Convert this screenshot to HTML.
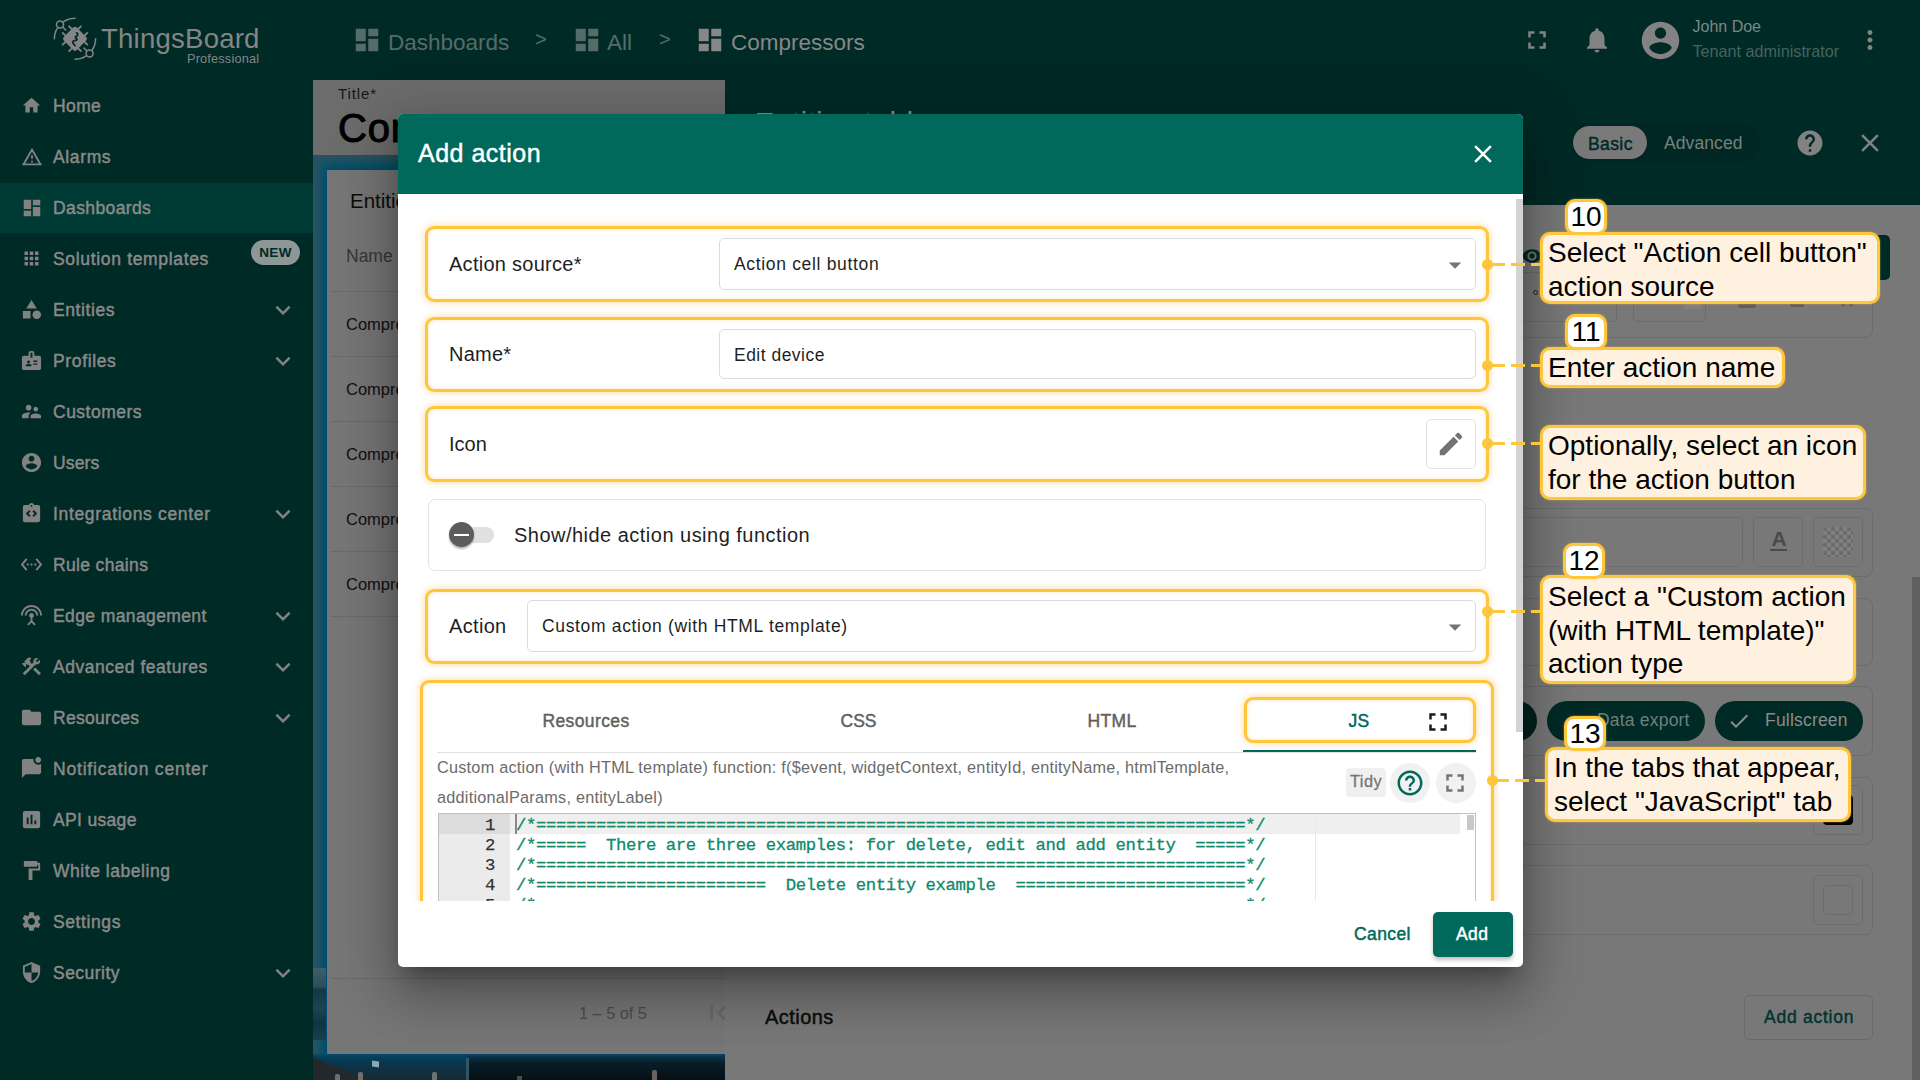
<!DOCTYPE html>
<html>
<head>
<meta charset="utf-8">
<title>ThingsBoard - Add action</title>
<style>
*{box-sizing:border-box;margin:0;padding:0}
html,body{width:1920px;height:1080px;overflow:hidden;background:#787878;font-family:"Liberation Sans",sans-serif;}
.abs{position:absolute}
svg{display:block}
#root{position:absolute;left:0;top:0;width:1920px;height:1080px;overflow:hidden}
.t{position:absolute;white-space:nowrap}
/* ---------- sidebar ---------- */
#side{left:0;top:0;width:313px;height:1080px;background:#002a26}
.mi{position:absolute;left:0;width:313px;height:51px;color:#8a8a8a;font-size:17.5px;}
.mi.sel{background:linear-gradient(#002a26 0,#002a26 1px,#003a35 1px)}
.mi svg.ic{position:absolute;left:20px;top:14px;width:23px;height:23px;fill:#828282}
.mi span{position:absolute;left:53px;top:16px;line-height:21px;white-space:nowrap;transform-origin:0 50%}
.mi svg.ch{position:absolute;left:268px;top:11px;width:30px;height:30px;fill:#828282}
/* ---------- topbar ---------- */
#top{left:313px;top:0;width:1607px;height:80px;background:#002a26}
.bc{position:absolute;top:28px;font-size:22.5px;line-height:30px;color:#566c69;white-space:nowrap}
.bc.on{color:#878787}
.bci{position:absolute;top:24.5px;width:30px;height:30px;fill:#566c69}
.bci.on{fill:#878787}
/* ---------- left edit area ---------- */
#titlep{left:313px;top:80px;width:412px;height:75px;background:#6c6c6c}
#dash{left:313px;top:155px;width:412px;height:925px;background:#005068;box-shadow:inset 9px 9px 9px -1px rgba(50,84,96,.8)}
#wcard{left:326px;top:169px;width:399px;height:885px;background:#767676;border-left:1px solid #004a7a;border-top:1px solid #004a7a}
.wrow{position:absolute;left:346px;font-size:16.5px;color:#111;white-space:nowrap}
.wline{position:absolute;left:331px;width:394px;height:1px;background:#6a6a6a}
/* ---------- right panel ---------- */
#rhead{left:725px;top:80px;width:1195px;height:125px;background:#002a26}
#rbody{left:725px;top:205px;width:1195px;height:875px;background:#787878}
.fcard{position:absolute;border:1px solid #6c6c6c;border-radius:8px}
/* ---------- dialog ---------- */
.med{-webkit-text-stroke:.45px currentColor}
#dlg{left:398px;top:114px;width:1125px;height:853px;background:#fff;border-radius:5px;overflow:hidden;box-shadow:0 14px 19px -9px rgba(0,0,0,.3),0 30px 48px 4px rgba(0,0,0,.19),0 11px 58px 10px rgba(0,0,0,.17)}
#dhead{left:0;top:0;width:1125px;height:80px;background:#00695c}
#dbody{left:0;top:80px;width:1125px;height:707px;overflow:hidden}
.hl{position:absolute;border:3px solid #fdc63b;border-radius:9px;box-shadow:0 0 6px 1px rgba(253,190,100,.5),inset 0 0 4px 0 rgba(253,190,100,.4)}
.fld{position:absolute;border:1px solid #dcdcdc;border-radius:5px;background:#fff}
.lbl{position:absolute;white-space:nowrap;font-size:20px;line-height:24px;color:#1f1f1f}
.val{position:absolute;white-space:nowrap;font-size:17.5px;line-height:21px;color:#1f1f1f;letter-spacing:.3px}
.tab{position:absolute;white-space:nowrap;font-size:17.5px;line-height:21px;color:#616161;letter-spacing:.4px;transform:translateX(-50%)}
.code{position:absolute;white-space:pre;font-family:"Liberation Mono",monospace;font-size:17.3px;letter-spacing:-.38px;line-height:20px;color:#0f8a6c;-webkit-text-stroke:.3px #0f8a6c}
.ln{position:absolute;width:56px;text-align:right;font-family:"Liberation Mono",monospace;font-size:17.3px;letter-spacing:-.38px;line-height:20px;color:#333;-webkit-text-stroke:.25px #333}
/* ---------- callouts ---------- */
.co{position:absolute;border:3px solid #fdc63b;border-radius:10px;background:#fff1df;color:#000;font-size:28px;line-height:33.5px;padding:1px 0 0 5px;white-space:nowrap;box-shadow:0 0 2px rgba(253,198,59,.7)}
.nb{position:absolute;border:3px solid #fdc63b;border-radius:10px;background:#fff;color:#000;font-size:28px;line-height:30px;text-align:center;box-shadow:0 0 2px rgba(253,198,59,.7)}
.dot{position:absolute;width:11px;height:11px;border-radius:50%;background:#fdc63b}
.dl{position:absolute;height:3px;background:repeating-linear-gradient(270deg,#fdc63b 0,#fdc63b 14px,transparent 14px,transparent 20px)}

</style>
</head>
<body>
<div id="root">
<div id="side" class="abs">
<div class="mi" style="top:80px"><svg class="ic" style="left:21px;top:15px;width:21px;height:21px" viewBox="0 0 24 24"><path fill-rule="evenodd" d="M10 20v-6h4v6h5v-8h3L12 3 2 12h3v8z"/></svg><span class="med" style="letter-spacing:0.39px">Home</span></div>
<div class="mi" style="top:131px"><svg class="ic" style="left:20.5px;top:14.5px;width:22px;height:22px" viewBox="0 0 24 24"><path fill-rule="evenodd" d="M12 5.99L19.53 19H4.47L12 5.99M12 2L1 21h22L12 2zm1 14h-2v2h2v-2zm0-6h-2v4h2v-4z"/></svg><span class="med" style="letter-spacing:0.63px">Alarms</span></div>
<div class="mi sel" style="top:182px"><svg class="ic" style="left:20.5px;top:14.5px;width:22px;height:22px" viewBox="0 0 24 24"><path fill-rule="evenodd" d="M3 13h8V3H3v10zm0 8h8v-6H3v6zm10 0h8V11h-8v10zm0-18v6h8V3h-8z"/></svg><span class="med" style="letter-spacing:0.39px">Dashboards</span></div>
<div class="mi" style="top:233px"><svg class="ic" style="left:21px;top:15px;width:21px;height:21px" viewBox="0 0 24 24"><path fill-rule="evenodd" d="M4 8h4V4H4v4zm6 12h4v-4h-4v4zm-6 0h4v-4H4v4zm0-6h4v-4H4v4zm6 0h4v-4h-4v4zm6-10v4h4V4h-4zm-6 4h4V4h-4v4zm6 6h4v-4h-4v4zm0 6h4v-4h-4v4z"/></svg><span class="med" style="letter-spacing:0.67px">Solution templates</span></div>
<div class="mi" style="top:284px"><svg class="ic" style="" viewBox="0 0 24 24"><path fill-rule="evenodd" d="M12 2l-5.5 9h11zM3 13.5h8v8H3zM17.5 13a4.5 4.5 0 1 0 0 9a4.5 4.5 0 1 0 0-9z"/></svg><span class="med" style="letter-spacing:0.58px">Entities</span><svg class="ch" style="" viewBox="0 0 24 24"><path fill-rule="evenodd" d="M16.59 8.59L12 13.17 7.41 8.59 6 10l6 6 6-6z"/></svg></div>
<div class="mi" style="top:335px"><svg class="ic" style="" viewBox="0 0 24 24"><path fill-rule="evenodd" d="M20 7h-5V4c0-1.1-.9-2-2-2h-2c-1.1 0-2 .9-2 2v3H4c-1.1 0-2 .9-2 2v11c0 1.1.9 2 2 2h16c1.1 0 2-.9 2-2V9c0-1.1-.9-2-2-2zM9 12c.83 0 1.5.67 1.5 1.5S9.83 15 9 15s-1.5-.67-1.5-1.5S8.17 12 9 12zm3 6H6v-.75c0-1 2-1.5 3-1.5s3 .5 3 1.5V18zm1-9h-2V4h2v5zm5 7.5h-4V15h4v1.5zm0-3h-4V12h4v1.5z"/></svg><span class="med" style="letter-spacing:0.64px">Profiles</span><svg class="ch" style="" viewBox="0 0 24 24"><path fill-rule="evenodd" d="M16.59 8.59L12 13.17 7.41 8.59 6 10l6 6 6-6z"/></svg></div>
<div class="mi" style="top:386px"><svg class="ic" style="" viewBox="0 0 24 24"><path fill-rule="evenodd" d="M16.5 12c1.38 0 2.49-1.12 2.49-2.5S17.88 7 16.5 7C15.12 7 14 8.12 14 9.5s1.12 2.5 2.5 2.5zM9 11c1.66 0 2.99-1.34 2.99-3S10.66 5 9 5C7.34 5 6 6.34 6 8s1.34 3 3 3zm7.5 3c-1.83 0-5.5.92-5.5 2.75V19h11v-2.25c0-1.83-3.67-2.75-5.5-2.75zM9 13c-2.33 0-7 1.17-7 3.5V19h7v-2.25c0-.85.33-2.34 2.37-3.47C10.5 13.1 9.66 13 9 13z"/></svg><span class="med" style="letter-spacing:0.49px">Customers</span></div>
<div class="mi" style="top:437px"><svg class="ic" style="" viewBox="0 0 24 24"><path fill-rule="evenodd" d="M12 2C6.48 2 2 6.48 2 12s4.48 10 10 10 10-4.48 10-10S17.52 2 12 2zm0 3c1.66 0 3 1.34 3 3s-1.34 3-3 3-3-1.34-3-3 1.34-3 3-3zm0 14.2c-2.5 0-4.71-1.28-6-3.22.03-1.99 4-3.08 6-3.08 1.99 0 5.97 1.09 6 3.08-1.29 1.94-3.5 3.22-6 3.22z"/></svg><span class="med" style="letter-spacing:0.16px">Users</span></div>
<div class="mi" style="top:488px"><svg class="ic" style="" viewBox="0 0 24 24"><path fill-rule="evenodd" d="M19 3h-4.18C14.4 1.84 13.3 1 12 1s-2.4.84-2.82 2H5c-1.1 0-2 .9-2 2v14c0 1.1.9 2 2 2h14c1.1 0 2-.9 2-2V5c0-1.1-.9-2-2-2zm-7 0c.55 0 1 .45 1 1s-.45 1-1 1-1-.45-1-1 .45-1 1-1zM11 14.17L9.59 15.59 6 12l3.59-3.59L11 9.83 8.83 12 11 14.17zm3.41 1.42L13 14.17 15.17 12 13 9.83l1.41-1.42L18 12l-3.59 3.59z"/></svg><span class="med" style="letter-spacing:0.67px">Integrations center</span><svg class="ch" style="" viewBox="0 0 24 24"><path fill-rule="evenodd" d="M16.59 8.59L12 13.17 7.41 8.59 6 10l6 6 6-6z"/></svg></div>
<div class="mi" style="top:539px"><svg class="ic" style="" viewBox="0 0 24 24"><path fill-rule="evenodd" d="M7.77 6.76L6.23 5.48.82 12l5.41 6.52 1.54-1.28L3.42 12l4.35-5.24zM7 13h2v-2H7v2zm10-2h-2v2h2v-2zm-6 2h2v-2h-2v2zm6.77-7.52l-1.54 1.28L20.58 12l-4.35 5.24 1.54 1.28L23.18 12l-5.41-6.52z"/></svg><span class="med" style="letter-spacing:0.35px">Rule chains</span></div>
<div class="mi" style="top:590px"><svg class="ic" style="" viewBox="0 0 24 24"><path fill-rule="evenodd" d="M12 5c-3.87 0-7 3.13-7 7h2c0-2.76 2.24-5 5-5s5 2.24 5 5h2c0-3.87-3.13-7-7-7zm1 9.29c.88-.39 1.5-1.26 1.5-2.29 0-1.38-1.12-2.5-2.5-2.5S9.5 10.62 9.5 12c0 1.02.62 1.9 1.5 2.29v3.3L7.59 21 9 22.41l3-3 3 3L16.41 21 13 17.59v-3.3zM12 1C5.93 1 1 5.93 1 12h2c0-4.97 4.03-9 9-9s9 4.03 9 9h2c0-6.07-4.93-11-11-11z"/></svg><span class="med" style="letter-spacing:0.39px">Edge management</span><svg class="ch" style="" viewBox="0 0 24 24"><path fill-rule="evenodd" d="M16.59 8.59L12 13.17 7.41 8.59 6 10l6 6 6-6z"/></svg></div>
<div class="mi" style="top:641px"><svg class="ic" style="" viewBox="0 0 24 24"><path fill-rule="evenodd" d="M13.78 15.17l2.12-2.12 6 6-2.12 2.12zM17.5 10c1.93 0 3.5-1.57 3.5-3.5 0-.58-.16-1.12-.41-1.6l-2.7 2.7-1.49-1.49 2.7-2.7c-.48-.25-1.02-.41-1.6-.41C15.57 3 14 4.57 14 6.5c0 .41.08.8.21 1.16l-1.85 1.85-1.78-1.78.71-.71-1.41-1.41L12 3.49c-1.17-1.17-3.07-1.17-4.24 0L4.22 7.03l1.41 1.41H2.81l-.71.71 3.54 3.54.71-.71V9.15l1.41 1.41.71-.71 1.78 1.78-7.41 7.41 2.12 2.12L16.34 9.79c.36.13.75.21 1.16.21z"/></svg><span class="med" style="letter-spacing:0.52px">Advanced features</span><svg class="ch" style="" viewBox="0 0 24 24"><path fill-rule="evenodd" d="M16.59 8.59L12 13.17 7.41 8.59 6 10l6 6 6-6z"/></svg></div>
<div class="mi" style="top:692px"><svg class="ic" style="" viewBox="0 0 24 24"><path fill-rule="evenodd" d="M10 4H4c-1.1 0-1.99.9-1.99 2L2 18c0 1.1.9 2 2 2h16c1.1 0 2-.9 2-2V8c0-1.1-.9-2-2-2h-8l-2-2z"/></svg><span class="med" style="letter-spacing:0.29px">Resources</span><svg class="ch" style="" viewBox="0 0 24 24"><path fill-rule="evenodd" d="M16.59 8.59L12 13.17 7.41 8.59 6 10l6 6 6-6z"/></svg></div>
<div class="mi" style="top:743px"><svg class="ic" style="" viewBox="0 0 24 24"><path fill-rule="evenodd" d="M22 6.98V16c0 1.1-.9 2-2 2H6l-4 4V4c0-1.1.9-2 2-2h10.1c-.06.32-.1.66-.1 1 0 2.76 2.24 5 5 5 1.13 0 2.16-.39 3-1.02zM16 3c0 1.66 1.34 3 3 3s3-1.34 3-3-1.34-3-3-3-3 1.34-3 3z"/></svg><span class="med" style="letter-spacing:0.8px">Notification center</span></div>
<div class="mi" style="top:794px"><svg class="ic" style="" viewBox="0 0 24 24"><path fill-rule="evenodd" d="M19 3H5c-1.1 0-2 .9-2 2v14c0 1.1.9 2 2 2h14c1.1 0 2-.9 2-2V5c0-1.1-.9-2-2-2zM9 17H7v-7h2v7zm4 0h-2V7h2v10zm4 0h-2v-4h2v4z"/></svg><span class="med" style="letter-spacing:0.33px">API usage</span></div>
<div class="mi" style="top:845px"><svg class="ic" style="" viewBox="0 0 24 24"><path fill-rule="evenodd" d="M18 4V3c0-.55-.45-1-1-1H5c-.55 0-1 .45-1 1v4c0 .55.45 1 1 1h12c.55 0 1-.45 1-1V6h1v4H9v11c0 .55.45 1 1 1h2c.55 0 1-.45 1-1v-9h8V4h-3z"/></svg><span class="med" style="letter-spacing:0.54px">White labeling</span></div>
<div class="mi" style="top:896px"><svg class="ic" style="" viewBox="0 0 24 24"><path fill-rule="evenodd" d="M19.14 12.94c.04-.3.06-.61.06-.94 0-.32-.02-.64-.07-.94l2.03-1.58c.18-.14.23-.41.12-.61l-1.92-3.32c-.12-.22-.37-.29-.59-.22l-2.39.96c-.5-.38-1.03-.7-1.62-.94l-.36-2.54c-.04-.24-.24-.41-.48-.41h-3.84c-.24 0-.43.17-.47.41l-.36 2.54c-.59.24-1.13.57-1.62.94l-2.39-.96c-.22-.08-.47 0-.59.22L2.74 8.87c-.12.21-.08.47.12.61l2.03 1.58c-.05.3-.09.63-.09.94s.02.64.07.94l-2.03 1.58c-.18.14-.23.41-.12.61l1.92 3.32c.12.22.37.29.59.22l2.39-.96c.5.38 1.03.7 1.62.94l.36 2.54c.05.24.24.41.48.41h3.84c.24 0 .44-.17.47-.41l.36-2.54c.59-.24 1.13-.56 1.62-.94l2.39.96c.22.08.47 0 .59-.22l1.92-3.32c.12-.22.07-.47-.12-.61l-2.01-1.58zM12 15.6c-1.98 0-3.6-1.62-3.6-3.6s1.62-3.6 3.6-3.6 3.6 1.62 3.6 3.6-1.62 3.6-3.6 3.6z"/></svg><span class="med" style="letter-spacing:0.6px">Settings</span></div>
<div class="mi" style="top:947px"><svg class="ic" style="" viewBox="0 0 24 24"><path fill-rule="evenodd" d="M12 1L3 5v6c0 5.55 3.84 10.74 9 12 5.16-1.26 9-6.45 9-12V5l-9-4zm0 10.99h7c-.53 4.12-3.28 7.79-7 8.94V12H5V6.3l7-3.11v8.8z"/></svg><span class="med" style="letter-spacing:0.47px">Security</span><svg class="ch" style="" viewBox="0 0 24 24"><path fill-rule="evenodd" d="M16.59 8.59L12 13.17 7.41 8.59 6 10l6 6 6-6z"/></svg></div>
<div class="abs" style="left:251px;top:240px;width:49px;height:25px;border-radius:13px;background:#8d9796;color:#002a26;font-size:13.5px;font-weight:bold;text-align:center;line-height:25px;letter-spacing:.3px">NEW</div>
<svg class="abs" style="left:52px;top:16px;width:46px;height:46px" viewBox="0 0 46 46" fill="none" stroke="#858585" stroke-width="1.5" stroke-linecap="round">
<path d="M43.6 22.75A20.6 20.6 0 0 1 23 43.35"/><path d="M2.4 22.75A20.6 20.6 0 0 1 23 2.15"/>
<path d="M10.7 11L13.8 14"/><path d="M35 35L32 32"/>
<circle cx="8" cy="8.4" r="3.5" fill="#002a26"/><circle cx="37.6" cy="37.6" r="3.5" fill="#002a26"/>
<g transform="translate(23 22.75) rotate(45)" stroke="none" fill="#858585">
<rect x="-9.2" y="-9.2" width="18.4" height="18.4" rx="2.6"/>
<rect x="-5.4" y="-13.6" width="1.8" height="5"/><rect x="3.6" y="-13.6" width="1.8" height="5"/>
<rect x="-5.4" y="8.6" width="1.8" height="5"/><rect x="3.6" y="8.6" width="1.8" height="5"/>
<rect x="-13.6" y="-5.4" width="5" height="1.8"/><rect x="-13.6" y="3.6" width="5" height="1.8"/>
<rect x="8.6" y="-5.4" width="5" height="1.8"/><rect x="8.6" y="3.6" width="5" height="1.8"/></g>
<path d="M24.6 16.8c1.6 1.2 1.4 3-.4 3.6-1.200.400-1.200 1.500.200 2.200 1 .500.700 1.600-.800 1.800-2.400.300-3.800 1.400-2.600 2.700M21 27.100l2.200 2.600" stroke="#002a26" stroke-width="1.700" stroke-linejoin="round"/>
</svg>
<div class="t" style="left:101px;top:21px;font-size:27.6px;line-height:36px;color:#858585;letter-spacing:.2px">ThingsBoard</div>
<div class="t" style="left:187px;top:52px;font-size:12.7px;line-height:15px;color:#858585;letter-spacing:.2px">Professional</div>
</div>
<div id="top" class="abs"></div>
<svg class="bci abs" style="left:352px" viewBox="0 0 24 24"><path fill-rule="evenodd" d="M3 13h8V3H3v10zm0 8h8v-6H3v6zm10 0h8V11h-8v10zm0-18v6h8V3h-8z"/></svg>
<div class="bc" style="left:388px">Dashboards</div>
<div class="bc" style="left:535px;top:24px;font-size:20px">&gt;</div>
<svg class="bci abs" style="left:571.500px" viewBox="0 0 24 24"><path fill-rule="evenodd" d="M3 13h8V3H3v10zm0 8h8v-6H3v6zm10 0h8V11h-8v10zm0-18v6h8V3h-8z"/></svg>
<div class="bc" style="left:607px">All</div>
<div class="bc" style="left:659px;top:24px;font-size:20px">&gt;</div>
<svg class="bci on abs" style="left:694.500px" viewBox="0 0 24 24"><path fill-rule="evenodd" d="M3 13h8V3H3v10zm0 8h8v-6H3v6zm10 0h8V11h-8v10zm0-18v6h8V3h-8z"/></svg>
<div class="bc on" style="left:731px">Compressors</div>
<svg class="abs" style="left:1522px;top:25px;width:30px;height:30px;fill:#838383" viewBox="0 0 24 24"><path fill-rule="evenodd" d="M7 14H5v5h5v-2H7v-3zm-2-4h2V7h3V5H5v5zm12 7h-3v2h5v-5h-2v3zM14 5v2h3v3h2V5h-5z"/></svg>
<svg class="abs" style="left:1582px;top:25px;width:30px;height:30px;fill:#838383" viewBox="0 0 24 24"><path fill-rule="evenodd" d="M12 22c1.1 0 2-.9 2-2h-4c0 1.1.89 2 2 2zm6-6v-5c0-3.07-1.64-5.64-4.5-6.32V4c0-.83-.67-1.5-1.5-1.5s-1.5.67-1.5 1.5v.68C7.63 5.36 6 7.92 6 11v5l-2 2v1h16v-1l-2-2z"/></svg>
<svg class="abs" style="left:1637.5px;top:17.5px;width:45px;height:45px;fill:#838383" viewBox="0 0 24 24"><path fill-rule="evenodd" d="M12 2C6.48 2 2 6.48 2 12s4.48 10 10 10 10-4.48 10-10S17.52 2 12 2zm0 3c1.66 0 3 1.34 3 3s-1.34 3-3 3-3-1.34-3-3 1.34-3 3-3zm0 14.2c-2.5 0-4.71-1.28-6-3.22.03-1.99 4-3.08 6-3.08 1.99 0 5.97 1.09 6 3.08-1.29 1.94-3.5 3.22-6 3.22z"/></svg>
<div class="t" style="left:1692.5px;top:17px;font-size:16px;line-height:20px;color:#7c8886">John Doe</div>
<div class="t" style="left:1692.5px;top:41px;font-size:16.2px;line-height:20px;color:#45645f">Tenant administrator</div>
<svg class="abs" style="left:1855px;top:25px;width:30px;height:30px;fill:#838383" viewBox="0 0 24 24"><path fill-rule="evenodd" d="M12 8c1.1 0 2-.9 2-2s-.9-2-2-2-2 .9-2 2 .9 2 2 2zm0 2c-1.1 0-2 .9-2 2s.9 2 2 2 2-.9 2-2-.9-2-2-2zm0 6c-1.1 0-2 .9-2 2s.9 2 2 2 2-.9 2-2-.9-2-2-2z"/></svg>
<div id="titlep" class="abs"></div>
<div class="t" style="left:338px;top:85px;font-size:15px;line-height:17px;color:#151515;letter-spacing:.9px">Title*</div>
<div class="t" style="left:338px;top:104px;font-size:40px;line-height:48px;color:#000;-webkit-text-stroke:1px #000;letter-spacing:.8px">Compressors</div>
<div id="dash" class="abs"></div>
<div class="abs" style="left:313px;top:1054px;width:154px;height:26px;background:linear-gradient(180deg,#074a6c 0,#053d58 4px,#0b3548 12px,#182a32 26px)"></div>
<div class="abs" style="left:313px;top:1040px;width:60px;height:40px;background:#23282a;clip-path:polygon(0 17px,13px 23px,56px 40px,0 40px)"></div>
<div class="abs" style="left:313px;top:968px;width:13px;height:72px;background:linear-gradient(180deg,#3d5f68 0,#2c4f5c 18px,#123844 22px,#1b4552 40px,#0f3440 55px,#16404e 72px)"></div>
<div class="abs" style="left:467px;top:1054px;width:258px;height:26px;background:linear-gradient(180deg,#0a4868 0,#0a3348 3px,#091d29 9px,#070f14 26px)"></div>
<div class="abs" style="left:466px;top:1058px;width:3px;height:22px;background:#2f5566"></div>
<div class="abs" style="left:372px;top:1061px;width:7px;height:6px;background:#8fa6b3;transform:skewY(8deg)"></div>
<div class="abs" style="left:380px;top:1061px;width:2px;height:12px;background:#1c2c36;transform:rotate(28deg)"></div>
<div class="abs" style="left:358px;top:1072px;width:5px;height:8px;background:#6f6f6f;border-radius:2px 2px 0 0"></div>
<div class="abs" style="left:432px;top:1072px;width:5px;height:8px;background:#6f6f6f;border-radius:2px 2px 0 0"></div>
<div class="abs" style="left:335px;top:1074px;width:5px;height:6px;background:#6f6f6f;border-radius:2px 2px 0 0"></div>
<div class="abs" style="left:652px;top:1070px;width:5px;height:10px;background:#6a625c;border-radius:2px 2px 0 0"></div>
<div class="abs" style="left:517px;top:1076px;width:5px;height:4px;background:#4a4a4a"></div>
<div id="wcard" class="abs"></div>
<div class="t" style="left:350px;top:189px;font-size:20.500px;line-height:24px;color:#0c0c0c">Entities</div>
<div class="t" style="left:346px;top:246px;font-size:17.500px;line-height:20px;color:#363636">Name</div>
<div class="wline" style="top:291px"></div>
<div class="wline" style="top:356px"></div>
<div class="wline" style="top:421px"></div>
<div class="wline" style="top:486px"></div>
<div class="wline" style="top:551px"></div>
<div class="wline" style="top:616px"></div>
<div class="wline" style="top:978px"></div>
<div class="wrow" style="top:314px;line-height:20px">Compressor</div>
<div class="wrow" style="top:379px;line-height:20px">Compressor</div>
<div class="wrow" style="top:444px;line-height:20px">Compressor</div>
<div class="wrow" style="top:509px;line-height:20px">Compressor</div>
<div class="wrow" style="top:574px;line-height:20px">Compressor</div>
<div class="t" style="left:579px;top:1004px;font-size:16.3px;line-height:18px;color:#4c4c4c">1 – 5 of 5</div>
<svg class="abs" style="left:703px;top:998px;width:30px;height:30px;fill:#696969" viewBox="0 0 24 24"><path fill-rule="evenodd" d="M18.41 16.59L13.82 12l4.59-4.59L17 6l-6 6 6 6zM6 6h2v12H6z"/></svg>
<div id="rhead" class="abs"></div>
<div id="rbody" class="abs"></div>
<div class="abs" style="left:1912px;top:577px;width:8px;height:503px;background:#5f5f5f"></div>
<div class="abs" style="left:1570px;top:123px;width:190px;height:39px;border-radius:20px;background:#002723"></div>
<div class="abs" style="left:1573px;top:126px;width:74px;height:33px;border-radius:17px;background:#797979"></div>
<div class="t med" style="left:1588px;top:134px;font-size:17.500px;line-height:21px;color:#002a26;letter-spacing:.4px">Basic</div>
<div class="t" style="left:1664px;top:133px;font-size:17.500px;line-height:21px;color:#76827f;letter-spacing:.1px">Advanced</div>
<svg class="abs" style="left:1795px;top:128px;width:30px;height:30px;fill:#828282" viewBox="0 0 24 24"><path fill-rule="evenodd" d="M12 2C6.48 2 2 6.48 2 12s4.48 10 10 10 10-4.48 10-10S17.52 2 12 2zm1 17h-2v-2h2v2zm2.07-7.75l-.9.92C13.45 12.9 13 13.5 13 15h-2v-.5c0-1.1.45-2.1 1.17-2.83l1.24-1.26c.37-.36.59-.86.59-1.41 0-1.1-.9-2-2-2s-2 .9-2 2H8c0-2.21 1.79-4 4-4s4 1.79 4 4c0 .88-.36 1.68-.93 2.25z"/></svg>
<svg class="abs" style="left:1855px;top:128px;width:30px;height:30px;fill:#828282" viewBox="0 0 24 24"><path fill-rule="evenodd" d="M19 6.41L17.59 5 12 10.59 6.41 5 5 6.41 10.59 12 5 17.59 6.41 19 12 13.41 17.59 19 19 17.59 13.41 12z"/></svg>
<div class="t" style="left:754.5px;top:105px;font-size:30px;line-height:36px;color:#8c8c8c;letter-spacing:.3px">Entities table</div>
<div class="fcard" style="left:745px;top:250px;width:1128px;height:88px"></div>
<div class="abs" style="left:1700px;top:235px;width:190px;height:45px;border-radius:5px;background:#002a26"></div>
<svg class="abs" style="left:1521px;top:245px;width:22px;height:22px;fill:#002a26" viewBox="0 0 24 24"><path fill-rule="evenodd" d="M12 4.5C7 4.5 2.73 7.61 1 12c1.73 4.39 6 7.5 11 7.5s9.27-3.11 11-7.5c-1.73-4.39-6-7.5-11-7.5zM12 17c-2.76 0-5-2.24-5-5s2.24-5 5-5 5 2.24 5 5-2.24 5-5 5zm0-8c-1.66 0-3 1.34-3 3s1.34 3 3 3 3-1.34 3-3-1.34-3-3-3z"/></svg>
<div class="fcard" style="left:1440px;top:272px;width:177px;height:50px;border-radius:5px"></div>
<div class="fcard" style="left:1633px;top:272px;width:73px;height:50px;border-radius:5px"></div>
<div class="abs" style="left:1533px;top:290px;width:5px;height:5px;border-radius:50%;border:1px solid #222"></div>
<div class="abs" style="left:1738px;top:303px;width:18px;height:5px;border-radius:0 0 3px 3px;background:#5e5e5e"></div>
<div class="abs" style="left:1790px;top:303px;width:14px;height:4px;border-radius:0 0 2px 2px;background:#5e5e5e"></div>
<div class="abs" style="left:1841px;top:303px;width:4px;height:3px;background:#5e5e5e"></div>
<div class="abs" style="left:1849px;top:303px;width:4px;height:3px;background:#5e5e5e"></div>
<div class="abs" style="left:1684px;top:303px;width:17px;height:6px;background:#808080"></div>
<div class="fcard" style="left:745px;top:508px;width:1128px;height:69px"></div>
<div class="fcard" style="left:1500px;top:517px;width:243px;height:50px;border-radius:5px"></div>
<div class="fcard" style="left:1753px;top:517px;width:50px;height:50px;border-radius:5px"></div>
<div class="t" style="left:1770px;top:528px;font-size:21px;line-height:22px;color:#4a4a4a;font-weight:bold;border-bottom:2.5px solid #4a4a4a;height:23px;width:17px;text-align:center;letter-spacing:-1px">A</div>
<div class="fcard" style="left:1813px;top:517px;width:50px;height:50px;border-radius:5px"></div>
<div class="abs" style="left:1823px;top:527px;width:30px;height:30px;border-radius:6px;background:#6b6b6b;background-image:linear-gradient(45deg,#808080 25%,transparent 25%,transparent 75%,#808080 75%),linear-gradient(45deg,#808080 25%,transparent 25%,transparent 75%,#808080 75%);background-size:8px 8px;background-position:0 0,4px 4px"></div>
<div class="fcard" style="left:745px;top:598px;width:1128px;height:68px"></div>
<div class="fcard" style="left:745px;top:686px;width:1128px;height:70px"></div>
<div class="abs" style="left:1480px;top:701px;width:57px;height:40px;border-radius:20px;background:#00231f"></div>
<div class="abs" style="left:1547px;top:701px;width:158px;height:40px;border-radius:20px;background:#002a26"></div>
<div class="t" style="left:1597px;top:710px;font-size:17.500px;line-height:21px;color:#6f7f7d;letter-spacing:.2px">Data export</div>
<div class="abs" style="left:1715px;top:701px;width:148px;height:40px;border-radius:20px;background:#002a26"></div>
<svg class="abs" style="left:1727px;top:709px;width:24px;height:24px;fill:#8c8c8c" viewBox="0 0 24 24"><path fill-rule="evenodd" d="M9 16.17L4.83 12l-1.42 1.41L9 19 21 7l-1.41-1.41z"/></svg>
<div class="t" style="left:1765px;top:710px;font-size:17.500px;line-height:21px;color:#8c8c8c;letter-spacing:.2px">Fullscreen</div>
<div class="fcard" style="left:745px;top:777px;width:1128px;height:68px"></div>
<div class="fcard" style="left:1813px;top:785px;width:50px;height:50px;border-radius:5px"></div>
<div class="abs" style="left:1823px;top:795px;width:30px;height:30px;border-radius:4px;background:#000"></div>
<div class="fcard" style="left:745px;top:865px;width:1128px;height:70px"></div>
<div class="fcard" style="left:1813px;top:875px;width:50px;height:50px;border-radius:5px"></div>
<div class="fcard" style="left:1823px;top:885px;width:30px;height:30px;border-radius:4px"></div>
<div class="t med" style="left:765px;top:1005px;font-size:20px;line-height:24px;color:#0c0c0c;letter-spacing:.45px">Actions</div>
<div class="fcard" style="left:1744px;top:995px;width:129px;height:45px;border-radius:5px;border-color:#6a6a6a"></div>
<div class="t med" style="left:1764px;top:1007px;font-size:17.500px;line-height:21px;color:#00352f;letter-spacing:.75px">Add action</div>
<div id="dlg" class="abs">
<div id="dhead" class="abs"></div>
<div class="t med" style="left:20px;top:24px;font-size:25px;line-height:30px;color:#fff;letter-spacing:.5px">Add action</div>
<svg class="abs" style="left:1069.6px;top:25px;width:30px;height:30px;fill:#fff" viewBox="0 0 24 24"><path fill-rule="evenodd" d="M19 6.41L17.59 5 12 10.59 6.41 5 5 6.41 10.59 12 5 17.59 6.41 19 12 13.41 17.59 19 19 17.59 13.41 12z"/></svg>
<div id="dbody" class="abs">
<div class="abs" style="left:1118px;top:5px;width:7px;height:533px;background:#d3d3d3"></div>
<div class="hl" style="left:27px;top:32px;width:1064px;height:76px"></div>
<div class="lbl" style="left:51px;top:58px;letter-spacing:.27px">Action source*</div>
<div class="fld" style="left:321px;top:44px;width:757px;height:52px"></div>
<div class="val" style="left:336px;top:60px;letter-spacing:.67px">Action cell button</div>
<svg class="abs" style="left:1042px;top:56px;width:30px;height:30px;fill:#757575" viewBox="0 0 24 24"><path fill-rule="evenodd" d="M7 10l5 5 5-5z"/></svg>
<div class="hl" style="left:27px;top:123px;width:1064px;height:75px"></div>
<div class="lbl" style="left:51px;top:148px;letter-spacing:.25px">Name*</div>
<div class="fld" style="left:321px;top:135px;width:757px;height:50px"></div>
<div class="val" style="left:336px;top:151px;letter-spacing:.48px">Edit device</div>
<div class="hl" style="left:27px;top:212px;width:1064px;height:76px"></div>
<div class="lbl" style="left:51px;top:238px">Icon</div>
<div class="fld" style="left:1028px;top:225px;width:50px;height:50px;border-color:#e2e2e2"></div>
<svg class="abs" style="left:1038px;top:235px;width:30px;height:30px;fill:#737373" viewBox="0 0 24 24"><path fill-rule="evenodd" d="M3 17.25V21h3.75L17.81 9.94l-3.75-3.75L3 17.25zM20.71 7.04c.39-.39.39-1.02 0-1.41l-2.34-2.34c-.39-.39-1.02-.39-1.41 0l-1.83 1.830 3.750 3.750 1.830-1.830z"/></svg>
<div class="fld" style="left:30px;top:305px;width:1058px;height:72px;border-color:#e3e3e3;border-radius:7px"></div>
<div class="abs" style="left:54px;top:333px;width:42px;height:16px;border-radius:8px;background:#e0e0e0"></div>
<div class="abs" style="left:51px;top:328px;width:25px;height:25px;border-radius:50%;background:#5c5c5c;box-shadow:0 2px 2px rgba(0,0,0,.3)"></div>
<div class="abs" style="left:56px;top:340px;width:15px;height:2px;background:#fff"></div>
<div class="lbl" style="left:116px;top:329px;letter-spacing:.48px">Show/hide action using function</div>
<div class="hl" style="left:27px;top:395px;width:1064px;height:75px"></div>
<div class="lbl" style="left:51px;top:420px;letter-spacing:.33px">Action</div>
<div class="fld" style="left:129px;top:406px;width:949px;height:52px"></div>
<div class="val" style="left:144px;top:422px;letter-spacing:.66px">Custom action (with HTML template)</div>
<svg class="abs" style="left:1042px;top:418px;width:30px;height:30px;fill:#757575" viewBox="0 0 24 24"><path fill-rule="evenodd" d="M7 10l5 5 5-5z"/></svg>
<div class="hl" style="left:22px;top:486px;width:1074px;height:300px"></div>
<div class="tab med" style="left:188px;top:517px;letter-spacing:0.4px">Resources</div>
<div class="tab med" style="left:460.5px;top:517px;letter-spacing:0px">CSS</div>
<div class="tab med" style="left:714px;top:517px;letter-spacing:0.4px">HTML</div>
<div class="tab med" style="left:961px;top:517px;color:#00695c">JS</div>
<svg class="abs" style="left:1025px;top:513px;width:30px;height:30px;fill:#1c1c1c" viewBox="0 0 24 24"><path fill-rule="evenodd" d="M7 14H5v5h5v-2H7v-3zm-2-4h2V7h3V5H5v5zm12 7h-3v2h5v-5h-2v3zM14 5v2h3v3h2V5h-5z"/></svg>
<div class="abs" style="left:39px;top:558px;width:1039px;height:1px;background:#e0e0e0"></div>
<div class="abs" style="left:845px;top:556px;width:233px;height:2px;background:#00695c"></div>
<div class="hl" style="left:846px;top:503px;width:232px;height:46px"></div>
<div class="t" style="left:39px;top:563px;font-size:16.250px;line-height:20px;color:#6b6b6b;letter-spacing:.24px">Custom action (with HTML template) function: f($event, widgetContext, entityId, entityName, htmlTemplate,</div>
<div class="t" style="left:39px;top:593px;font-size:16.250px;line-height:20px;color:#6b6b6b;letter-spacing:.24px">additionalParams, entityLabel)</div>
<div class="abs" style="left:948px;top:574px;width:40px;height:29px;border-radius:4px;background:#f0f0f0"></div>
<div class="t" style="left:952px;top:577px;font-size:16.250px;line-height:20px;color:#757575;letter-spacing:.5px;-webkit-text-stroke:.3px #757575">Tidy</div>
<div class="abs" style="left:992px;top:569px;width:40px;height:40px;border-radius:50%;background:#f1f1f1"></div>
<svg class="abs" style="left:997px;top:574px;width:30px;height:30px;fill:#00695c" viewBox="0 0 24 24"><path fill-rule="evenodd" d="M11 18h2v-2h-2v2zm1-16C6.48 2 2 6.48 2 12s4.48 10 10 10 10-4.48 10-10S17.52 2 12 2zm0 18c-4.41 0-8-3.59-8-8s3.59-8 8-8 8 3.59 8 8-3.590 8-8 8zm0-14c-2.210 0-4 1.790-4 4h2c0-1.100.900-2 2-2s2 .900 2 2c0 2-3 1.750-3 5h2c0-2.250 3-2.500 3-5 0-2.210-1.790-4-4-4z"/></svg>
<div class="abs" style="left:1038px;top:569px;width:40px;height:40px;border-radius:50%;background:#f1f1f1"></div>
<svg class="abs" style="left:1042px;top:574px;width:30px;height:30px;fill:#757575" viewBox="0 0 24 24"><path fill-rule="evenodd" d="M7 14H5v5h5v-2H7v-3zm-2-4h2V7h3V5H5v5zm12 7h-3v2h5v-5h-2v3zM14 5v2h3v3h2V5h-5z"/></svg>
<div class="abs" style="left:40px;top:619px;width:1038px;height:120px;border:1px solid #c0c0c0;background:#fff;overflow:hidden">
<div class="abs" style="left:0;top:0;width:71px;height:120px;background:#ebebeb"></div>
<div class="abs" style="left:0;top:0;width:71px;height:20px;background:#dcdcdc"></div>
<div class="abs" style="left:71px;top:0;width:950px;height:20px;background:#efefef"></div>
<div class="abs" style="left:876px;top:0;width:1px;height:120px;background:#e8e8e8"></div>
<div class="abs" style="left:1028px;top:1px;width:7px;height:15px;background:#c8c8c8"></div>
<div class="abs" style="left:76px;top:0;width:2px;height:20px;background:#8a8a8a"></div>
<div class="ln" style="left:0;top:2px">1</div>
<div class="code" style="left:77px;top:2px">/*=======================================================================*/</div>
<div class="ln" style="left:0;top:22px">2</div>
<div class="code" style="left:77px;top:22px">/*=====  There are three examples: for delete, edit and add entity  =====*/</div>
<div class="ln" style="left:0;top:42px">3</div>
<div class="code" style="left:77px;top:42px">/*=======================================================================*/</div>
<div class="ln" style="left:0;top:62px">4</div>
<div class="code" style="left:77px;top:62px">/*=======================  Delete entity example  =======================*/</div>
<div class="ln" style="left:0;top:82px">5</div>
<div class="code" style="left:77px;top:82px">/*=======================================================================*/</div>
</div>
</div>
<div class="t med" style="left:956px;top:810px;font-size:17.500px;line-height:21px;color:#00695c;letter-spacing:.4px">Cancel</div>
<div class="abs" style="left:1035px;top:798px;width:80px;height:45px;border-radius:5px;background:#00695c;box-shadow:0 3px 4px rgba(0,0,0,.25)"></div>
<div class="t med" style="left:1058px;top:810px;font-size:17.500px;line-height:21px;color:#fff;letter-spacing:.4px">Add</div>
</div>
<div class="dl" style="left:1487px;top:263px;width:58px"></div>
<div class="dot" style="left:1482px;top:259px"></div>
<div class="dl" style="left:1487px;top:364px;width:58px"></div>
<div class="dot" style="left:1482px;top:360px"></div>
<div class="dl" style="left:1487px;top:442px;width:58px"></div>
<div class="dot" style="left:1482px;top:438px"></div>
<div class="dl" style="left:1487px;top:610px;width:58px"></div>
<div class="dot" style="left:1482px;top:606px"></div>
<div class="dl" style="left:1492px;top:779px;width:57px"></div>
<div class="dot" style="left:1487px;top:775px"></div>
<div class="co" style="left:1540px;top:232px;width:340px;height:72px;">Select "Action cell button"<br>action source</div>
<div class="nb" style="left:1565px;top:199px;width:42px;height:36px">10</div>
<div class="co" style="left:1540px;top:347px;width:245px;height:41px;">Enter action name</div>
<div class="nb" style="left:1565px;top:314px;width:42px;height:36px">11</div>
<div class="co" style="left:1540px;top:425px;width:326px;height:75px;">Optionally, select an icon<br>for the action button</div>
<div class="co" style="left:1540px;top:575px;width:316px;height:109px;padding-top:2px">Select a "Custom action<br>(with HTML template)"<br>action type</div>
<div class="nb" style="left:1563px;top:543px;width:42px;height:36px">12</div>
<div class="co" style="left:1545px;top:747px;width:306px;height:75px;padding-left:6px">In the tabs that appear,<br>select "JavaScript" tab</div>
<div class="nb" style="left:1564px;top:716px;width:42px;height:35px">13</div>
</div>
</body>
</html>
